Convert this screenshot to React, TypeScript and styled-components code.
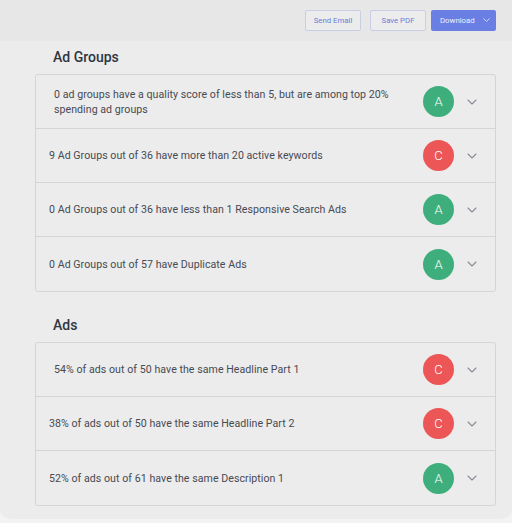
import styled, { createGlobalStyle } from 'styled-components'

const GlobalStyle = createGlobalStyle`
	* { box-sizing: border-box; }
	body {
		margin: 0;
		background: #f3f3f3;
		font-family: Roboto, 'Noto Sans', sans-serif;
	}
`

type Grade = 'A' | 'C'

interface Check {
	text: string
	grade: Grade
	indent?: number
}

const AD_GROUPS: Check[] = [
	{
		text: '0 ad groups have a quality score of less than 5, but are among top 20% spending ad groups',
		grade: 'A',
		indent: 5,
	},
	{ text: '9 Ad Groups out of 36 have more than 20 active keywords', grade: 'C' },
	{ text: '0 Ad Groups out of 36 have less than 1 Responsive Search Ads', grade: 'A' },
	{ text: '0 Ad Groups out of 57 have Duplicate Ads', grade: 'A' },
]

const ADS: Check[] = [
	{ text: '54% of ads out of 50 have the same Headline Part 1', grade: 'C', indent: 5 },
	{ text: '38% of ads out of 50 have the same Headline Part 2', grade: 'C' },
	{ text: '52% of ads out of 61 have the same Description 1', grade: 'A' },
]

function Chevron({ color = '#8a8d96', size = 10 }: { color?: string; size?: number }) {
	return (
		<svg width={size} height={size * 0.6} viewBox="0 0 10 6" fill="none">
			<path d="M1 1l4 4 4-4" stroke={color} strokeWidth="1.1" strokeLinecap="round" strokeLinejoin="round" />
		</svg>
	)
}

function Section({ title, items }: { title: string; items: Check[] }) {
	return (
		<>
			<Heading>{title}</Heading>
			<Card>
				{items.map((item) => (
					<Row key={item.text}>
						<RowText $indent={item.indent ?? 0}>{item.text}</RowText>
						<Badge $grade={item.grade}>{item.grade}</Badge>
						<ChevronWrap>
							<Chevron />
						</ChevronWrap>
					</Row>
				))}
			</Card>
		</>
	)
}

export default function App() {
	return (
		<>
			<GlobalStyle />
			<Panel>
				<TopBar>
					<OutlineButton>Send Email</OutlineButton>
					<OutlineButton>Save PDF</OutlineButton>
					<PrimaryButton>
						Download
						<Chevron color="#eef0ff" size={7} />
					</PrimaryButton>
				</TopBar>
				<Content>
					<Section title="Ad Groups" items={AD_GROUPS} />
					<Section title="Ads" items={ADS} />
				</Content>
			</Panel>
		</>
	)
}

const Panel = styled.div`
	width: 512px;
	height: 519px;
	background: #ececec;
	border-radius: 0 0 10px 10px;
	overflow: hidden;
`
const TopBar = styled.div`
	height: 41px;
	background: #e7e7e7;
	display: flex;
	align-items: center;
	justify-content: flex-end;
	gap: 9px;
	padding: 0 16px 0 0;
`
const OutlineButton = styled.button`
	height: 21px;
	width: 56px;
	border: 1px solid #c9cde6;
	border-radius: 2px;
	background: #ececec;
	color: #6a7cd6;
	font-family: Roboto, sans-serif;
	font-size: 7.8px;
	padding: 0;
`
const PrimaryButton = styled.button`
	height: 21px;
	width: 65px;
	margin-left: -4px;
	border: none;
	border-radius: 2px;
	background: #6a7fe3;
	color: #eef0ff;
	font-family: Roboto, sans-serif;
	font-size: 7.8px;
	display: flex;
	align-items: center;
	gap: 8px;
	padding: 0 0 0 9px;
`
const Content = styled.div`
	padding: 0 16px 0 35px;
`
const Heading = styled.h2`
	margin: 8px 0 9px 18px;
	height: 16px;
	line-height: 16px;
	font-size: 14px;
	font-weight: 500;
	color: #2f3640;
	& ~ & {
		margin-top: 25px;
	}
`
const Card = styled.div`
	border: 1px solid #d4d5d9;
	border-radius: 3px;
`
const Row = styled.div`
	height: 54px;
	display: flex;
	align-items: center;
	padding: 0 18px 0 13px;
	&:not(:last-child) {
		border-bottom: 1px solid #d4d5d9;
	}
`
const RowText = styled.div<{ $indent: number }>`
	flex: 1;
	padding-left: ${({ $indent }) => $indent}px;
	margin-right: 18px;
	font-size: 10.6px;
	letter-spacing: 0.05px;
	line-height: 15px;
	color: #474a52;
`
const Badge = styled.div<{ $grade: Grade }>`
	width: 31px;
	height: 31px;
	border-radius: 50%;
	background: ${({ $grade }) => ($grade === 'A' ? '#3fae7d' : '#ec5656')};
	color: #fff;
	font-size: 13px;
	font-weight: 300;
	display: flex;
	align-items: center;
	justify-content: center;
	margin-right: 13px;
`
const ChevronWrap = styled.div`
	width: 10px;
	display: flex;
	align-items: center;
`
